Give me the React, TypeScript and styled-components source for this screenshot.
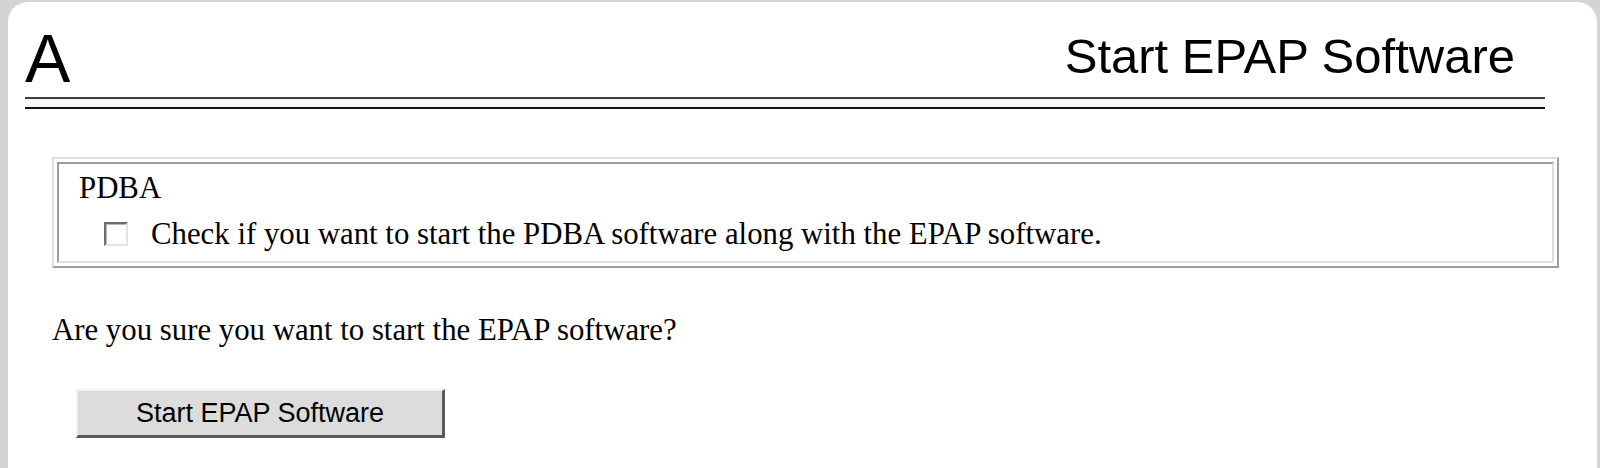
import React from "react";
import styled, { createGlobalStyle } from "styled-components";

const Global = createGlobalStyle`
  html, body, #root { margin: 0; padding: 0; height: 100%; }
  body { background: #d4d4d4; }
  * { box-sizing: border-box; }
`;

const Frame = styled.div`
  height: 100vh;
  padding: 2px 3px 0 8px;
  background: #d4d4d4;
`;

const Panel = styled.div`
  height: 100%;
  background: #ffffff;
  border-radius: 20px 20px 0 0;
  overflow: hidden;
  display: flex;
  flex-direction: column;
`;

const Top = styled.div`
  margin: 0 52px 0 17px;
  padding-top: 22px;
`;

const Header = styled.div`
  display: flex;
  justify-content: space-between;
  align-items: flex-start;
`;

const Letter = styled.div`
  font-family: "Liberation Sans", Arial, sans-serif;
  font-size: 68px;
  line-height: 68px;
  color: #000;
`;

const Title = styled.h1`
  margin: 8px 30px 0 0;
  font-family: "Liberation Sans", Arial, sans-serif;
  font-weight: normal;
  font-size: 49px;
  line-height: 49px;
  color: #000;
`;

const Rule = styled.div`
  margin-top: 5px;
  height: 12px;
  border-top: 2px solid #3c3c3c;
  border-bottom: 2px solid #111;
  background: #f8f8f8;
`;

const Content = styled.div`
  margin: 48px 38px 0 44px;
  font-family: "Liberation Serif", "Times New Roman", serif;
  font-size: 30.8px;
  line-height: 34px;
  color: #000;
`;

const GroupOuter = styled.div`
  border-style: solid;
  border-width: 2px;
  border-color: #dedede #9c9c9c #9c9c9c #dedede;
  padding: 3px;
`;

const GroupInner = styled.div`
  border-style: solid;
  border-width: 2px;
  border-color: #9c9c9c #dedede #dedede #9c9c9c;
  padding: 7px 20px 10px 20px;
`;

const GroupLabel = styled.div``;

const CheckRow = styled.label`
  display: flex;
  align-items: center;
  gap: 23px;
  margin-top: 12px;
  padding-left: 25px;
`;

const Box = styled.input`
  appearance: none;
  margin: 0;
  width: 24px;
  height: 24px;
  flex: none;
  background: #fff;
  border-style: solid;
  border-width: 2px;
  border-color: #6e6e6e #e2e2e2 #e2e2e2 #6e6e6e;
  box-shadow: inset 1px 1px 0 #b8b8b8;
`;

const Question = styled.p`
  margin: 45px 0 0 0;
`;

const Button = styled.button`
  margin: 42px 0 0 24px;
  width: 369px;
  height: 49px;
  display: flex;
  align-items: center;
  justify-content: center;
  padding: 0;
  background: #dcdcdc;
  border-style: solid;
  border-width: 2px 3px 3px 2px;
  border-color: #f2f2f2 #5a5a5a #5a5a5a #f2f2f2;
  font-family: "Liberation Sans", Arial, sans-serif;
  font-size: 27px;
  color: #000;
  cursor: pointer;
`;

export default function App() {
  return (
    <>
      <Global />
      <Frame>
        <Panel>
          <Top>
            <Header>
              <Letter>A</Letter>
              <Title>Start EPAP Software</Title>
            </Header>
            <Rule />
          </Top>
          <Content>
            <GroupOuter>
              <GroupInner>
                <GroupLabel>PDBA</GroupLabel>
                <CheckRow>
                  <Box type="checkbox" />
                  <span>Check if you want to start the PDBA software along with the EPAP software.</span>
                </CheckRow>
              </GroupInner>
            </GroupOuter>
            <Question>Are you sure you want to start the EPAP software?</Question>
            <Button type="button">Start EPAP Software</Button>
          </Content>
        </Panel>
      </Frame>
    </>
  );
}
